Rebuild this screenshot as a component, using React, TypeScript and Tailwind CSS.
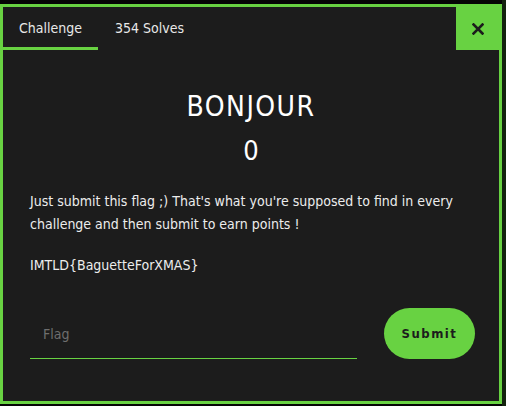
import React from 'react'

const font = { fontFamily: '"Liberation Sans Narrow", "DejaVu Sans Condensed", "Roboto Condensed", Roboto, sans-serif' }

const CloseIcon: React.FC = () => (
  <svg width="12" height="12" viewBox="0 0 12 12" fill="none">
    <path d="M1.5 1.5 L10.5 10.5 M10.5 1.5 L1.5 10.5" stroke="#1c1c1c" strokeWidth="2.6" strokeLinecap="square" />
  </svg>
)

const App: React.FC = () => {
  return (
    <div className="w-[506px] h-[406px] bg-[#050505] flex overflow-hidden" style={font}>
      <div className="mt-[4px] w-[502px] h-[400px] bg-[#1c1c1c] border-[3px] border-[#68d242] flex flex-col">
        <div className="flex h-[43px] shrink-0">
          <div className="w-[95px] flex items-center justify-center border-b-[3px] border-[#68d242] text-[14px] text-[#e8e8e8] pt-[2px]">
            Challenge
          </div>
          <div className="px-[17px] flex items-center text-[14px] text-[#e8e8e8] pb-[1px]">
            354 Solves
          </div>
          <div className="flex-1" />
          <button className="w-[43px] h-[43px] bg-[#68d242] flex items-center justify-center">
            <CloseIcon />
          </button>
        </div>

        <div className="flex flex-col px-[27px]">
          <h1 className="mt-[40px] text-center text-[28px] leading-[34px] tracking-[1.5px] text-white">BONJOUR</h1>
          <div className="mt-[12px] text-center text-[27px] leading-[30px] text-white">0</div>
          <p className="mt-[24px] text-[14px] leading-[23px] text-[#ececec]">
            Just submit this flag ;) That's what you're supposed to find in every challenge and then submit to earn points !
          </p>
          <p className="mt-[18px] text-[14px] leading-[23px] text-[#ececec]">IMTLD{'{'}BaguetteForXMAS{'}'}</p>

          <div className="mt-[31px] flex items-end">
            <div className="w-[327px] border-b border-[#68d242] h-[50px] flex items-center pl-[13px] pt-[2px]">
              <input
                placeholder="Flag"
                className="bg-transparent outline-none text-[14px] text-white placeholder:text-[#6e6e6e] w-full"
                style={font}
              />
            </div>
            <div className="flex-1" />
            <button className="mr-[-3px] w-[91px] h-[51px] rounded-full bg-[#68d242] text-[#1c1c1c] font-bold text-[13px] tracking-[1.5px] flex items-center justify-center" style={font}>
              Submit
            </button>
          </div>
        </div>
      </div>
      <div className="flex-1 bg-[#14230f]" />
    </div>
  )
}

export default App
